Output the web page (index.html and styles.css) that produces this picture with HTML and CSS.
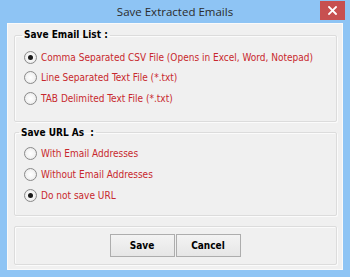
FILE: index.html
```html
<!DOCTYPE html>
<html>
<head>
<meta charset="utf-8">
<link rel="stylesheet" href="styles.css">
</head>
<body>
<div class="window">
  <div class="titlebar">
    <span class="title">Save Extracted Emails</span>
    <span class="close">
      <svg width="9" height="9" viewBox="0 0 9 9"><path d="M1 1 L8 8 M8 1 L1 8" stroke="#fff" stroke-width="1.8" stroke-linecap="square"/></svg>
    </span>
  </div>
  <div class="client">
    <fieldset class="group group-email">
      <legend class="legend">Save Email List :</legend>
      <label class="option"><span class="radio checked"></span><span class="opt-text">Comma Separated CSV File (Opens in Excel, Word, Notepad)</span></label>
      <label class="option"><span class="radio"></span><span class="opt-text">Line Separated Text File (*.txt)</span></label>
      <label class="option"><span class="radio"></span><span class="opt-text">TAB Delimited Text File (*.txt)</span></label>
    </fieldset>
    <fieldset class="group group-url">
      <legend class="legend legend-url">Save URL As&nbsp; :</legend>
      <label class="option"><span class="radio"></span><span class="opt-text">With Email Addresses</span></label>
      <label class="option"><span class="radio"></span><span class="opt-text">Without Email Addresses</span></label>
      <label class="option"><span class="radio checked"></span><span class="opt-text">Do not save URL</span></label>
    </fieldset>
    <div class="group group-buttons">
      <button class="btn">Save</button>
      <button class="btn">Cancel</button>
    </div>
  </div>
</div>
</body>
</html>
```

FILE: styles.css
```css
html, body {
  margin: 0;
  padding: 0;
}
body {
  width: 350px;
  height: 277px;
  overflow: hidden;
  background: #8ec4f4;
}
.window {
  position: relative;
  width: 350px;
  height: 277px;
  box-sizing: border-box;
  background: #8ec4f4;
  display: flex;
  flex-direction: column;
}
.titlebar {
  height: 23px;
  display: flex;
  align-items: center;
  justify-content: center;
}
.title {
  font-family: "Open Sans", "Noto Sans", sans-serif;
  font-size: 11.5px;
  color: #2b2b2b;
  margin-top: -1px;
}
.close {
  position: absolute;
  top: 1px;
  left: 320px;
  width: 25px;
  height: 19px;
  background: #c75050;
  display: flex;
  align-items: center;
  justify-content: center;
}
.close svg { display: block; }
.client {
  margin: 0 7px 7px 7px;
  height: 247px;
  box-sizing: border-box;
  background: #f0f0f0;
  border: 1px solid #fafafa;
  padding: 4px 5px 0 6px;
  display: flex;
  flex-direction: column;
}
.group {
  margin: 0;
  border: 1px solid #dcdcdc;
  box-shadow: inset 1px 1px 0 #fbfbfb, 1px 1px 0 #fbfbfb;
  border-radius: 2px;
  min-width: 0;
}
.legend {
  font-family: "DejaVu Sans Condensed", "DejaVu Sans", sans-serif;
  font-weight: bold;
  font-size: 10px;
  line-height: 14px;
  color: #000;
  padding: 0 2px;
  margin-left: -2px;
}
.legend-url {
  margin-left: -5px;
  padding: 0 2px;
}
.group-email {
  padding: 5px 0 12px 9px;
}
.group-email .option { height: 20.5px; }
.group-url {
  margin-top: 4px;
  padding: 3px 0 9px 9px;
}
.group-url .option { height: 21px; }
.option {
  display: flex;
  align-items: center;
  gap: 4px;
  font-family: "DejaVu Sans Condensed", "DejaVu Sans", sans-serif;
  font-size: 10px;
  color: #c8282d;
}
.radio {
  width: 11px;
  height: 11px;
  border: 1px solid #8a8a8a;
  border-radius: 50%;
  background: radial-gradient(circle at 50% 50%, #ffffff 0%, #f4f4f4 50%, #e0e0e0 100%);
  display: flex;
  align-items: center;
  justify-content: center;
  flex: none;
}
.radio.checked::after {
  content: "";
  width: 5px;
  height: 5px;
  border-radius: 50%;
  background: #1a1a1a;
}
.group-buttons {
  margin-top: 10px;
  height: 39px;
  box-sizing: border-box;
  display: flex;
  justify-content: center;
  align-items: center;
  gap: 1px;
  padding-right: 1px;
}
.btn {
  width: 65px;
  height: 23px;
  margin: 0;
  padding: 0;
  border: 1px solid #adadad;
  background: linear-gradient(#f3f3f3, #e6e6e6);
  font-family: "DejaVu Sans Condensed", "DejaVu Sans", sans-serif;
  font-weight: bold;
  font-size: 10px;
  color: #000;
}
```
